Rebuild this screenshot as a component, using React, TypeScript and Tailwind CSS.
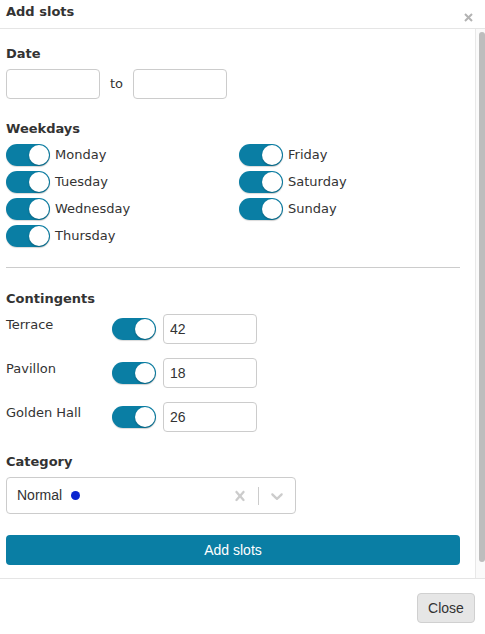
import React from "react";

const days = [
  ["Monday", "Friday"],
  ["Tuesday", "Saturday"],
  ["Wednesday", "Sunday"],
  ["Thursday", ""],
];

const contingents = [
  { name: "Terrace", value: "42" },
  { name: "Pavillon", value: "18" },
  { name: "Golden Hall", value: "26" },
];

function Toggle() {
  return (
    <div className="flex h-[22px] w-[44px] shrink-0 items-center justify-end rounded-full bg-[#0a7ea4] p-[1px] shadow-[0_1px_1px_rgba(0,0,0,0.15)]">
      <div className="h-[20px] w-[20px] rounded-full bg-white shadow-[0_1px_2px_rgba(0,0,0,0.25)]" />
    </div>
  );
}

function DayRow({ label }: { label: string }) {
  if (!label) return <div />;
  return (
    <div className="flex h-[22px] items-center gap-[5px]">
      <Toggle />
      <span className="text-[13px] text-[#333]">{label}</span>
    </div>
  );
}

export default function App() {
  const body = { fontFamily: '"DejaVu Sans", Verdana, sans-serif' };
  const arial = { fontFamily: '"Liberation Sans", Arial, sans-serif' };

  return (
    <div className="flex h-[634px] w-[485px] flex-col bg-white text-[#333]" style={body}>
      <div className="flex h-[29px] shrink-0 items-start justify-between border-b border-[#e5e5e5] pl-[6px] pr-[12px]">
        <h1 className="mt-[3px] text-[13px] font-bold leading-[18px]">Add slots</h1>
        <svg className="mt-[13px]" width="9" height="9" viewBox="0 0 9 9">
          <path d="M1 1L8 8M8 1L1 8" stroke="#b3b3b3" strokeWidth="2" />
        </svg>
      </div>

      <div className="flex min-h-0 flex-1">
        <div className="flex-1 pl-[6px] pr-[15px]">
          <h2 className="mt-[17px] text-[13px] font-bold leading-[16px]">Date</h2>
          <div className="mt-[7px] flex h-[30px] items-center">
            <input className="h-[30px] w-[94px] rounded-[4px] border border-[#ccc] bg-white" style={arial} />
            <span className="ml-[10px] mr-[10px] text-[13px]">to</span>
            <input className="h-[30px] w-[94px] rounded-[4px] border border-[#ccc] bg-white" style={arial} />
          </div>

          <h2 className="mt-[22px] text-[13px] font-bold leading-[16px]">Weekdays</h2>
          <div className="mt-[7px] grid grid-cols-[233px_1fr] gap-y-[5px]">
            {days.map(([a, b]) => (
              <React.Fragment key={a}>
                <DayRow label={a} />
                <DayRow label={b} />
              </React.Fragment>
            ))}
          </div>

          <hr className="mt-[20px] border-t border-[#ccc]" />

          <h2 className="mt-[23px] text-[13px] font-bold leading-[16px]">Contingents</h2>
          <div className="mt-[7px] flex flex-col gap-[14px]">
            {contingents.map((c) => (
              <div key={c.name} className="flex h-[30px] items-start">
                <span className="mt-[3px] w-[106px] text-[13px] leading-[16px]">{c.name}</span>
                <div className="flex h-[30px] items-center gap-[7px]">
                  <Toggle />
                  <input
                    className="h-[30px] w-[94px] rounded-[4px] border border-[#ccc] px-[6px] text-[14px] text-[#333]"
                    style={arial}
                    defaultValue={c.value}
                  />
                </div>
              </div>
            ))}
          </div>

          <h2 className="mt-[22px] text-[13px] font-bold leading-[16px]">Category</h2>
          <div className="mt-[7px] flex h-[37px] w-[290px] items-center rounded-[4px] border border-[#ccc] bg-white" style={arial}>
            <div className="flex flex-1 items-center pl-[10px] text-[14px] text-[#333]">
              Normal
              <span className="ml-[9px] inline-block h-[9px] w-[9px] rounded-full bg-[#0b26d0]" />
            </div>
            <div className="flex items-center">
              <div className="p-[8px]">
                <svg width="20" height="20" viewBox="0 0 20 20" fill="#ccc">
                  <path d="M14.348 14.849c-0.469 0.469-1.229 0.469-1.697 0l-2.651-3.030-2.651 3.029c-0.469 0.469-1.229 0.469-1.697 0-0.469-0.469-0.469-1.229 0-1.697l2.758-3.15-2.759-3.152c-0.469-0.469-0.469-1.228 0-1.697s1.228-0.469 1.697 0l2.652 3.031 2.651-3.031c0.469-0.469 1.228-0.469 1.697 0s0.469 1.229 0 1.697l-2.758 3.152 2.758 3.15c0.469 0.469 0.469 1.229 0 1.698z" />
                </svg>
              </div>
              <span className="h-[18px] w-px bg-[#ccc]" />
              <div className="p-[8px]">
                <svg width="20" height="20" viewBox="0 0 20 20" fill="#ccc">
                  <path d="M4.516 7.548c0.436-0.446 1.043-0.481 1.576 0l3.908 3.747 3.908-3.747c0.533-0.481 1.141-0.446 1.574 0 0.436 0.445 0.408 1.197 0 1.615-0.406 0.418-4.695 4.502-4.695 4.502-0.217 0.223-0.502 0.335-0.787 0.335s-0.57-0.112-0.789-0.335c0 0-4.287-4.084-4.695-4.502s-0.436-1.170 0-1.615z" />
                </svg>
              </div>
            </div>
          </div>

          <button
            className="mt-[21px] h-[30px] w-full rounded-[4px] bg-[#0a7ea4] text-[14px] text-white"
            style={arial}
          >
            Add slots
          </button>
        </div>

        <div className="flex w-[10px] shrink-0 justify-end border-l border-[#e8e8e8] bg-[#fafafa] pb-[16px] pt-[3px]">
          <div className="w-[6px] rounded-full bg-[#bdbdbd]" />
        </div>
      </div>

      <div className="flex h-[56px] shrink-0 items-start justify-end border-t border-[#e5e5e5] pr-[10px] pt-[14px]">
        <button
          className="h-[30px] w-[58px] rounded-[4px] border border-[#d0d0d0] bg-[#e6e6e6] text-[14px] text-[#333]"
          style={arial}
        >
          Close
        </button>
      </div>
    </div>
  );
}
